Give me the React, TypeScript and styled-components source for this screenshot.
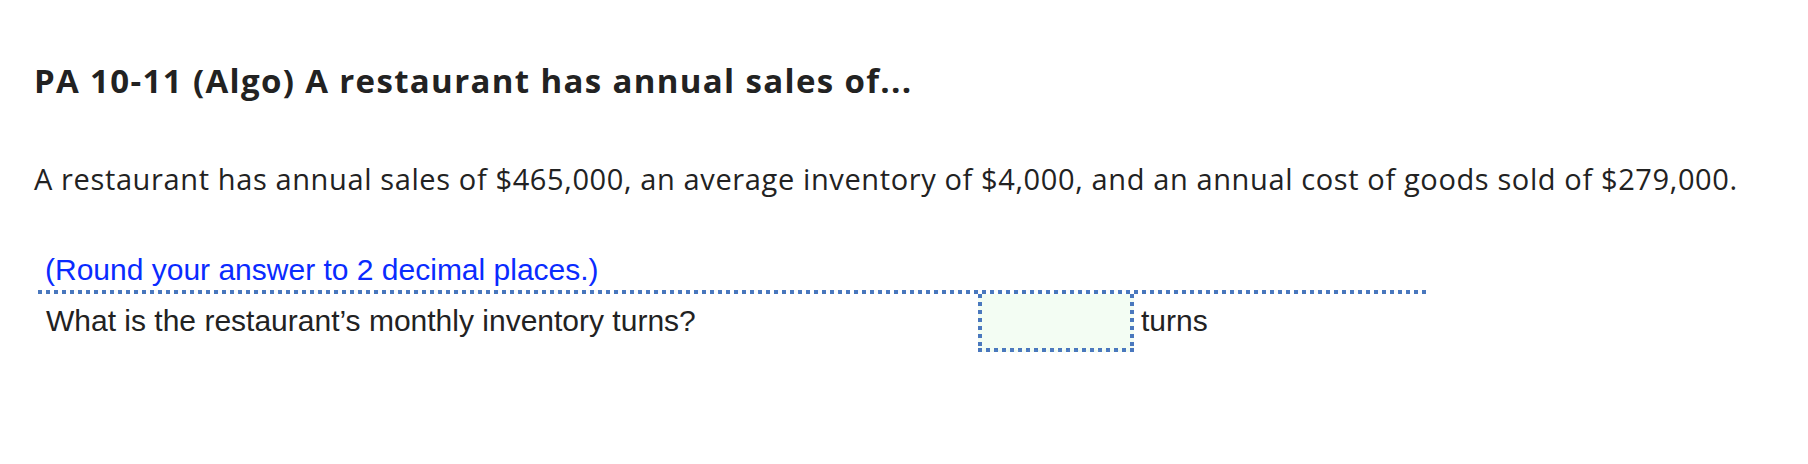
import React from "react";
import styled, { createGlobalStyle } from "styled-components";

const Global = createGlobalStyle`
  html, body { margin: 0; padding: 0; background: #ffffff; }
  body { width: 1808px; height: 464px; overflow: hidden; }
`;

const DOT = "#4a78be";

const Page = styled.div`
  padding: 59px 0 0 34px;
  color: #222222;
`;

const Title = styled.h1`
  margin: 0;
  font-family: "Open Sans", Lato, sans-serif;
  font-weight: 700;
  font-size: 33px;
  letter-spacing: 1.35px;
  line-height: 44px;
  color: #222222;
`;

const Paragraph = styled.p`
  margin: 57px 0 0 0;
  font-family: "Open Sans", Lato, sans-serif;
  font-size: 29px;
  letter-spacing: 0.62px;
  line-height: 38px;
  color: #222222;
`;

const Hint = styled.div`
  margin: 55px 0 0 11px;
  font-family: "Liberation Sans", Arial, sans-serif;
  font-size: 30px;
  line-height: 34px;
  color: #0a2bff;
`;

const Table = styled.div`
  margin: 3px 0 0 4px;
  width: 1392px;
  padding-top: 4px;
  background: repeating-linear-gradient(to right, ${DOT} 0 4px, transparent 4px 8px) left top / 100% 4px no-repeat;
`;

const Row = styled.div`
  display: grid;
  grid-template-columns: 940px auto 1fr;
  align-items: start;
  height: 58px;
`;

const Question = styled.div`
  padding: 10px 0 0 8px;
  font-family: "Liberation Sans", Arial, sans-serif;
  font-size: 30px;
  line-height: 34px;
  color: #222222;
`;

const AnswerBox = styled.div`
  width: 156px;
  height: 58px;
  box-sizing: border-box;
  background:
    repeating-linear-gradient(to bottom, ${DOT} 0 4px, transparent 4px 8px) left top / 4px 100% no-repeat,
    repeating-linear-gradient(to bottom, ${DOT} 0 4px, transparent 4px 8px) right top / 4px 100% no-repeat,
    repeating-linear-gradient(to right, ${DOT} 0 4px, transparent 4px 8px) left bottom / 100% 4px no-repeat,
    #f3fdf3;
`;

const Unit = styled.div`
  padding: 10px 0 0 7px;
  font-family: "Liberation Sans", Arial, sans-serif;
  font-size: 30px;
  line-height: 34px;
  color: #222222;
`;

export default function App() {
  return (
    <>
      <Global />
      <Page>
        <Title>PA 10-11 (Algo) A restaurant has annual sales of...</Title>
        <Paragraph>
          A restaurant has annual sales of $465,000, an average inventory of $4,000, and an annual cost of goods sold of $279,000.
        </Paragraph>
        <Hint>(Round your answer to 2 decimal places.)</Hint>
        <Table>
          <Row>
            <Question>What is the restaurant’s monthly inventory turns?</Question>
            <AnswerBox />
            <Unit>turns</Unit>
          </Row>
        </Table>
      </Page>
    </>
  );
}
